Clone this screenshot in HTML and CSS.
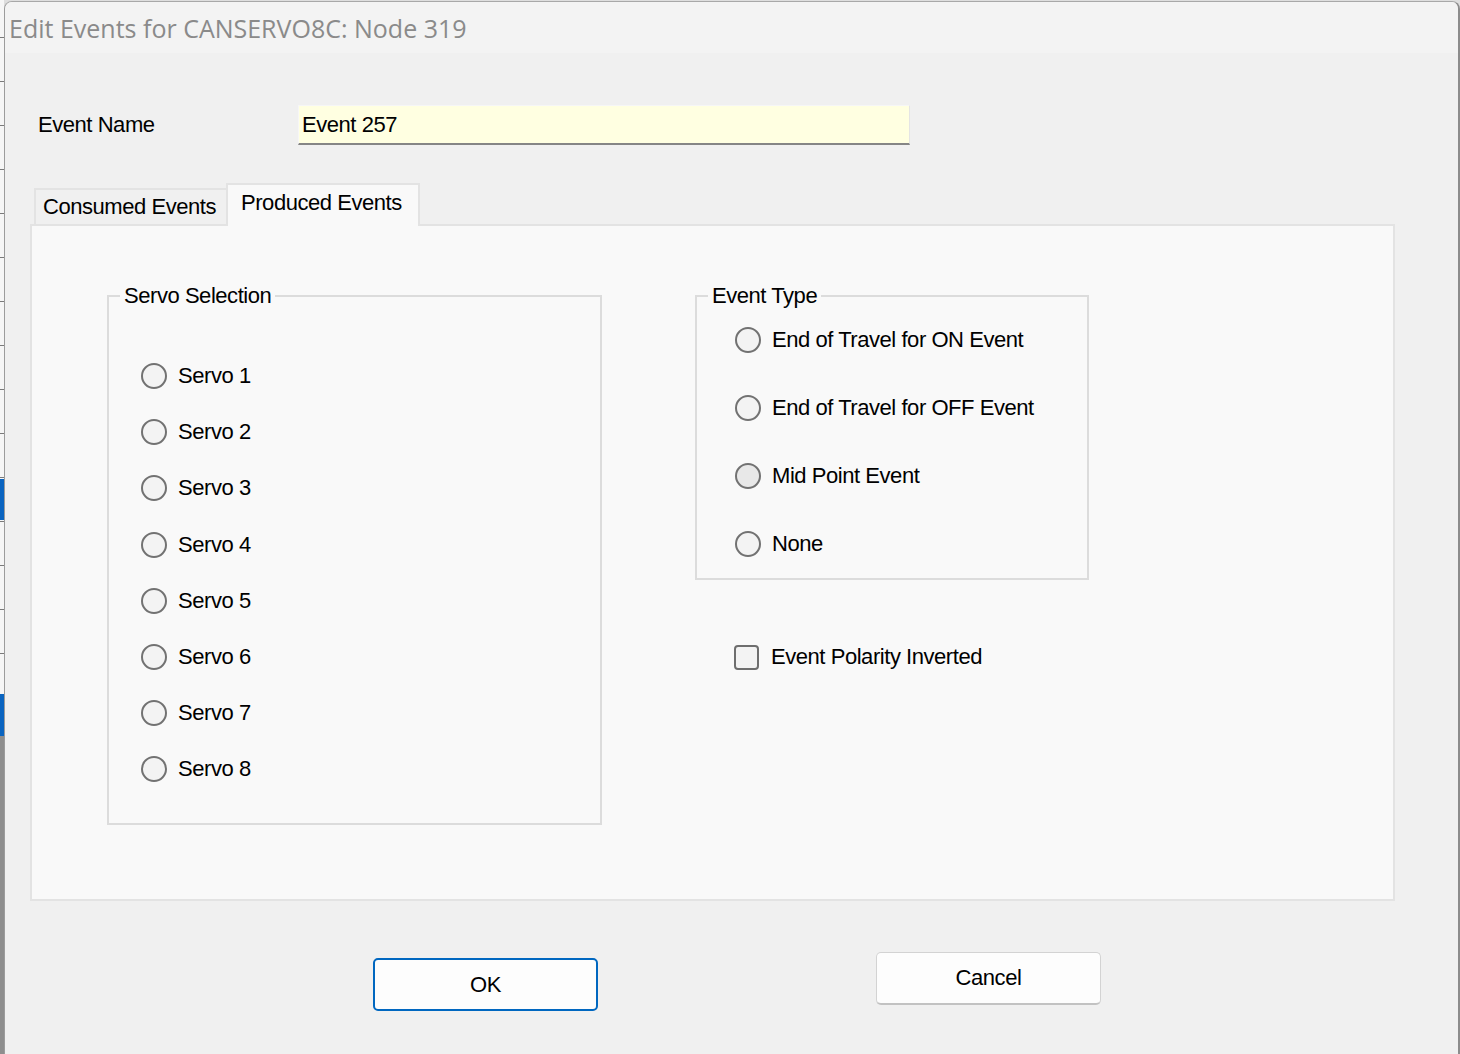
FILE: index.html
```html
<!DOCTYPE html>
<html lang="en">
<head>
<meta charset="utf-8">
<title>Edit Events for CANSERVO8C: Node 319</title>
<link rel="stylesheet" href="styles.css">
</head>
<body>
<div class="screen">
  <div class="backdrop"></div>
  <div class="dialog">
    <div class="titlebar">Edit Events for CANSERVO8C: Node 319</div>
    <div class="client">
      <div class="name-row">
        <label class="name-label" for="evname">Event Name</label>
        <input id="evname" class="name-input" type="text" value="Event 257">
      </div>

      <div class="tabs">
        <div class="tab-strip">
          <div class="tab">Consumed Events</div>
          <div class="tab tab-active">Produced Events</div>
        </div>
        <div class="tab-panel">
          <fieldset class="group group-servo">
            <legend class="group-title">Servo Selection</legend>
            <div class="opts-servo">
              <label class="opt opt-servo"><input type="radio" name="servo" class="radio">Servo 1</label>
              <label class="opt opt-servo"><input type="radio" name="servo" class="radio">Servo 2</label>
              <label class="opt opt-servo"><input type="radio" name="servo" class="radio">Servo 3</label>
              <label class="opt opt-servo"><input type="radio" name="servo" class="radio">Servo 4</label>
              <label class="opt opt-servo"><input type="radio" name="servo" class="radio">Servo 5</label>
              <label class="opt opt-servo"><input type="radio" name="servo" class="radio">Servo 6</label>
              <label class="opt opt-servo"><input type="radio" name="servo" class="radio">Servo 7</label>
              <label class="opt opt-servo"><input type="radio" name="servo" class="radio">Servo 8</label>
            </div>
          </fieldset>

          <div class="right-col">
            <fieldset class="group group-type">
              <legend class="group-title">Event Type</legend>
              <div class="opts-type">
                <label class="opt opt-type"><input type="radio" name="etype" class="radio">End of Travel for ON Event</label>
                <label class="opt opt-type"><input type="radio" name="etype" class="radio">End of Travel for OFF Event</label>
                <label class="opt opt-type"><input type="radio" name="etype" class="radio radio-hover">Mid Point Event</label>
                <label class="opt opt-type"><input type="radio" name="etype" class="radio">None</label>
              </div>
            </fieldset>
            <label class="check-row"><input type="checkbox" class="check">Event Polarity Inverted</label>
          </div>
        </div>
      </div>

      <div class="buttons">
        <button class="btn btn-ok" type="button">OK</button>
        <button class="btn btn-cancel" type="button">Cancel</button>
      </div>
    </div>
  </div>
</div>
</body>
</html>
```

FILE: styles.css
```css
html, body {
  margin: 0;
  padding: 0;
}

body {
  background: #dedede;
  font-family: "Liberation Sans", Arial, sans-serif;
  font-size: 22px;
  letter-spacing: -0.45px;
  color: #000;
}

.screen {
  display: flex;
  width: 1460px;
  height: 1054px;
  overflow: hidden;
}

.backdrop {
  flex: none;
  width: 4px;
  background:
    linear-gradient(to bottom,
      transparent 0, transparent 479px,
      #0a64c0 479px, #0a64c0 520px,
      transparent 520px, transparent 694px,
      #0a64c0 694px, #0a64c0 736px,
      #8e8e8e 736px, #8e8e8e 100%),
    repeating-linear-gradient(to bottom,
      #f6f6f6 0, #f6f6f6 37px,
      #7a7a7a 37px, #7a7a7a 38px,
      #f6f6f6 38px, #f6f6f6 44px);
}

.dialog {
  flex: 1;
  margin-top: 1px;
  display: flex;
  flex-direction: column;
  background: #f0f0f0;
  border-top: 1px solid #a8a8a8;
  border-left: 1px solid #9c9c9c;
  border-right: 2px solid #8c8c8c;
  border-radius: 8px 8px 0 0;
  overflow: hidden;
}

.titlebar {
  flex: none;
  height: 51px;
  display: flex;
  align-items: center;
  padding-left: 4px;
  background: #f3f3f3;
  color: #8a8a8a;
  font-family: "Open Sans", "Noto Sans", sans-serif;
  font-size: 25px;
  letter-spacing: 0;
}

.client {
  flex: 1;
  display: flex;
  flex-direction: column;
}

/* Event name row */
.name-row {
  display: flex;
  align-items: center;
  margin-top: 52px;
  padding-left: 33px;
  height: 40px;
}

.name-label {
  width: 260px;
  flex: none;
}

.name-input {
  box-sizing: border-box;
  width: 612px;
  height: 40px;
  margin: 0;
  padding: 0 0 0 3px;
  background: #ffffe1;
  border: 1px solid #f6f6f6;
  border-right-color: #e4e4e4;
  border-bottom: 2px solid #858585;
  font: inherit;
  letter-spacing: inherit;
  color: #000;
  outline: none;
}

/* Tabs */
.tabs {
  margin-top: 38px;
  margin-left: 25px;
  display: flex;
  flex-direction: column;
}

.tab-strip {
  display: flex;
  align-items: flex-end;
  height: 41px;
  padding-left: 4px;
}

.tab {
  box-sizing: border-box;
  height: 36px;
  width: 192px;
  display: flex;
  align-items: center;
  padding-left: 7px;
  background: #f0f0f0;
  border: 2px solid #e3e3e3;
  border-right: none;
  border-bottom: none;
}

.tab-active {
  position: relative;
  z-index: 1;
  width: 194px;
  height: 43px;
  margin-bottom: -2px;
  padding-left: 13px;
  padding-bottom: 5px;
  background: #f9f9f9;
  border-right: 2px solid #e3e3e3;
}

.tab-panel {
  box-sizing: border-box;
  width: 1365px;
  height: 677px;
  display: flex;
  align-items: flex-start;
  padding: 58px 0 0 75px;
  background: #f9f9f9;
  border: 2px solid #e3e3e3;
}

/* Group boxes */
.group {
  box-sizing: border-box;
  margin: 0;
  padding: 0;
  min-width: 0;
  border: 2px solid #dcdcdc;
}

.group-title {
  margin-left: 11px;
  padding: 0 4px;
  line-height: 24px;
}

.group-servo {
  width: 495px;
}

.opts-servo {
  display: flex;
  flex-direction: column;
  padding: 40px 0 25px 32px;
}

.opt {
  display: flex;
  align-items: center;
}

.opt-servo {
  height: 56.2px;
}

.right-col {
  margin-left: 93px;
  width: 394px;
  display: flex;
  flex-direction: column;
}

.group-type {
  width: 394px;
}

.opts-type {
  display: flex;
  flex-direction: column;
  gap: 28px;
  padding: 12px 0 14px 38px;
}

.opt-type {
  height: 40px;
}

.radio {
  -webkit-appearance: none;
  appearance: none;
  box-sizing: border-box;
  flex: none;
  width: 26px;
  height: 26px;
  margin: 0 11px 0 0;
  border: 2px solid #727272;
  border-radius: 50%;
  background: #f3f3f3;
}

.radio-hover {
  background: #e8e8e8;
}

.check-row {
  display: flex;
  align-items: center;
  height: 40px;
  margin-top: 57px;
  padding-left: 39px;
}

.check {
  -webkit-appearance: none;
  appearance: none;
  box-sizing: border-box;
  flex: none;
  width: 25px;
  height: 25px;
  margin: 0 12px 0 0;
  border: 2px solid #6e6e6e;
  border-radius: 4px;
  background: #f3f3f3;
}

/* Buttons */
.buttons {
  display: flex;
  align-items: flex-start;
  margin-top: 51px;
  padding-left: 368px;
  gap: 278px;
}

.btn {
  box-sizing: border-box;
  width: 225px;
  height: 53px;
  margin: 0;
  padding: 0;
  background: #fdfdfd;
  font: inherit;
  letter-spacing: inherit;
  color: #000;
  border-radius: 5px;
}

.btn-ok {
  margin-top: 6px;
  border: 2px solid #0067c0;
}

.btn-cancel {
  border: 1px solid #d3d3d3;
  border-bottom: 2px solid #c2c2c2;
}
```
